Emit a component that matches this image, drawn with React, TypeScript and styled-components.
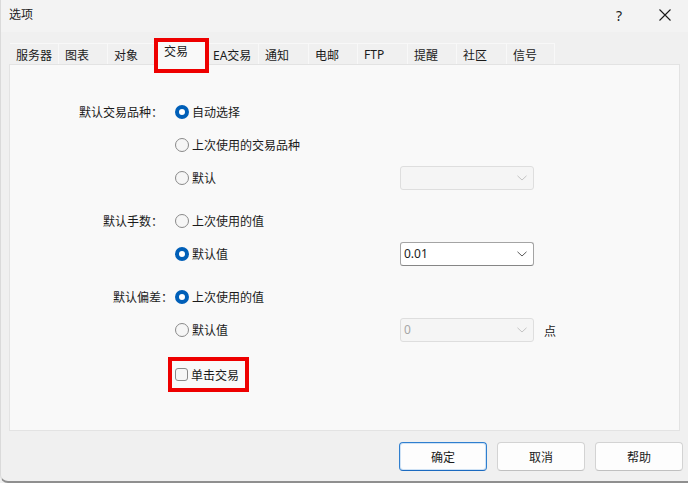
import React from "react";
import styled, { createGlobalStyle } from "styled-components";

const GlobalStyle = createGlobalStyle`
  html, body {
    margin: 0;
    padding: 0;
    background: #f0f0f0;
  }
  body {
    font-family: "Noto Sans", "Noto Sans CJK SC", sans-serif;
    font-size: 12px;
    color: #1b1b1b;
  }
`;

const Window = styled.div`
  width: 688px;
  height: 483px;
  box-sizing: border-box;
  background: #f0f0f0;
  border-left: 1px solid #dadada;
  border-bottom: 2px solid #8f8f8f;
  border-bottom-left-radius: 8px;
  display: flex;
  flex-direction: column;
  overflow: hidden;
`;

const TitleBar = styled.div`
  height: 32px;
  flex: none;
  display: flex;
  align-items: center;
  padding-left: 8px;
  background: #f3f3f3;
`;

const Title = styled.span`
  flex: 1;
  margin-top: -4px;
`;

const TitleButton = styled.div`
  width: 46px;
  height: 32px;
  display: flex;
  align-items: center;
  justify-content: center;
  font-size: 14px;
  margin-top: -2px;
`;

const TabBar = styled.div`
  display: flex;
  height: 21px;
  margin: 11px 8px 0 9px;
  position: relative;
  z-index: 1;
`;

const Tab = styled.div<{ $w: number; $active?: boolean }>`
  box-sizing: border-box;
  flex: none;
  width: ${({ $w, $active }) => ($active ? $w + 4 : $w)}px;
  height: ${({ $active }) => ($active ? "25px" : "21px")};
  margin: ${({ $active }) => ($active ? "-3px -2px -1px" : "0")};
  padding: ${({ $active }) => ($active ? "1px 0 0 8px" : "2px 0 0 6px")};
  background: ${({ $active }) => ($active ? "#f9f9f9" : "#f0f0f0")};
  border-top: 1px solid ${({ $active }) => ($active ? "#e3e3e3" : "#f8f8f8")};
  border-right: 1px solid ${({ $active }) => ($active ? "#e3e3e3" : "#f8f8f8")};
  border-left: ${({ $active }) => ($active ? "1px solid #e3e3e3" : "none")};
  white-space: nowrap;
  position: relative;
  z-index: ${({ $active }) => ($active ? 2 : 0)};

  ${({ $active }) =>
    $active &&
    `
    &::after {
      content: "";
      position: absolute;
      top: -3px;
      left: -2px;
      right: -1px;
      bottom: -8px;
      border: 4px solid #ee0000;
    }
  `}
`;

const Panel = styled.div`
  box-sizing: border-box;
  height: 367px;
  margin: 0 8px 0 8px;
  background: #f9f9f9;
  border: 1px solid #e3e3e3;
  padding-top: 30px;
`;

const Group = styled.div<{ $gap?: number }>`
  display: grid;
  grid-template-columns: 165px 1fr;
  grid-auto-rows: 33px;
  margin-top: ${({ $gap }) => $gap ?? 0}px;
`;

const GroupLabel = styled.div<{ $tight?: boolean }>`
  grid-column: 1;
  grid-row: 1;
  align-self: center;
  text-align: right;
  padding-right: ${({ $tight }) => ($tight ? 2 : 12)}px;
`;

const OptionRow = styled.div`
  grid-column: 2;
  display: grid;
  grid-template-columns: 215px 134px auto;
  column-gap: 10px;
  align-items: center;
`;

const Choice = styled.label`
  display: inline-flex;
  align-items: center;
  gap: 3px;
`;

const RadioDot = styled.span<{ $checked?: boolean }>`
  box-sizing: border-box;
  width: 14px;
  height: 14px;
  border-radius: 50%;
  flex: none;
  ${({ $checked }) =>
    $checked
      ? `
    background: #ffffff;
    border: 4px solid #005fb8;
  `
      : `
    background: #f6f6f6;
    border: 1px solid #8a8a8a;
  `}
`;

const CheckBox = styled.span`
  box-sizing: border-box;
  width: 13px;
  height: 13px;
  border-radius: 3px;
  border: 1px solid #8a8a8a;
  background: #f6f6f6;
  flex: none;
`;

const Combo = styled.div<{ $disabled?: boolean }>`
  box-sizing: border-box;
  height: 24px;
  display: flex;
  align-items: center;
  padding: 0 6px 0 3px;
  border-radius: 3px;
  border: 1px solid ${({ $disabled }) => ($disabled ? "#dedede" : "#a4a4a4")};
  border-bottom-color: ${({ $disabled }) => ($disabled ? "#dedede" : "#868686")};
  background: ${({ $disabled }) => ($disabled ? "#f5f5f5" : "#ffffff")};
  color: ${({ $disabled }) => ($disabled ? "#a6a6a6" : "#1b1b1b")};
`;

const ComboValue = styled.span`
  flex: 1;
`;

const Unit = styled.span`
  margin-top: 3px;
`;

const Highlight = styled.div`
  grid-column: 2;
  justify-self: start;
  height: 35px;
  box-sizing: border-box;
  margin-left: -7px;
  padding: 0 6px 0 3px;
  border: 4px solid #ee0000;
  display: flex;
  align-items: center;
`;

const Footer = styled.div`
  display: flex;
  justify-content: flex-end;
  gap: 10px;
  padding: 11px 5px 0 0;
`;

const Button = styled.button<{ $primary?: boolean }>`
  box-sizing: border-box;
  width: 88px;
  height: 29px;
  font: inherit;
  color: #1b1b1b;
  background: #fdfdfd;
  border-radius: 4px;
  border: 1px solid ${({ $primary }) => ($primary ? "#2f7fcf" : "#d3d3d3")};
  border-bottom-color: ${({ $primary }) => ($primary ? "#1b6ac0" : "#c0c0c0")};
  box-shadow: ${({ $primary }) => ($primary ? "inset 0 0 0 1px #cfe2f5" : "none")};
  padding: 0;
`;

const Chevron = ({ color }: { color: string }) => (
  <svg width="10" height="6" viewBox="0 0 10 6">
    <path d="M0.5 0.8 L5 5 L9.5 0.8" fill="none" stroke={color} strokeWidth="1" />
  </svg>
);

const Close = () => (
  <svg width="12" height="12" viewBox="0 0 12 12">
    <path d="M0.5 0.5 L11.5 11.5 M11.5 0.5 L0.5 11.5" stroke="#1b1b1b" strokeWidth="1.1" />
  </svg>
);

const tabs = [
  { name: "服务器", w: 49 },
  { name: "图表", w: 49 },
  { name: "对象", w: 49 },
  { name: "交易", w: 50, active: true },
  { name: "EA交易", w: 52 },
  { name: "通知", w: 50 },
  { name: "电邮", w: 49 },
  { name: "FTP", w: 50 },
  { name: "提醒", w: 49 },
  { name: "社区", w: 50 },
  { name: "信号", w: 48 },
];

const Radio = ({ checked, children }: { checked?: boolean; children: React.ReactNode }) => (
  <Choice>
    <RadioDot $checked={checked} />
    {children}
  </Choice>
);

const DropDown = ({ value, disabled }: { value?: string; disabled?: boolean }) => (
  <Combo $disabled={disabled}>
    <ComboValue>{value}</ComboValue>
    <Chevron color={disabled ? "#c4c4c4" : "#5a5a5a"} />
  </Combo>
);

export default function App() {
  return (
    <>
      <GlobalStyle />
      <Window>
        <TitleBar>
          <Title>选项</Title>
          <TitleButton>?</TitleButton>
          <TitleButton>
            <Close />
          </TitleButton>
        </TitleBar>

        <TabBar>
          {tabs.map((t) => (
            <Tab key={t.name} $w={t.w} $active={t.active}>
              {t.name}
            </Tab>
          ))}
        </TabBar>

        <Panel>
          <Group>
            <GroupLabel>默认交易品种：</GroupLabel>
            <OptionRow>
              <Radio checked>自动选择</Radio>
            </OptionRow>
            <OptionRow>
              <Radio>上次使用的交易品种</Radio>
            </OptionRow>
            <OptionRow>
              <Radio>默认</Radio>
              <DropDown disabled />
            </OptionRow>
          </Group>

          <Group $gap={10}>
            <GroupLabel>默认手数：</GroupLabel>
            <OptionRow>
              <Radio>上次使用的值</Radio>
            </OptionRow>
            <OptionRow>
              <Radio checked>默认值</Radio>
              <DropDown value="0.01" />
            </OptionRow>
          </Group>

          <Group $gap={10}>
            <GroupLabel $tight>默认偏差：</GroupLabel>
            <OptionRow>
              <Radio checked>上次使用的值</Radio>
            </OptionRow>
            <OptionRow>
              <Radio>默认值</Radio>
              <DropDown value="0" disabled />
              <Unit>点</Unit>
            </OptionRow>
          </Group>

          <Group $gap={11}>
            <Highlight>
              <Choice>
                <CheckBox />
                单击交易
              </Choice>
            </Highlight>
          </Group>
        </Panel>

        <Footer>
          <Button $primary>确定</Button>
          <Button>取消</Button>
          <Button>帮助</Button>
        </Footer>
      </Window>
    </>
  );
}
